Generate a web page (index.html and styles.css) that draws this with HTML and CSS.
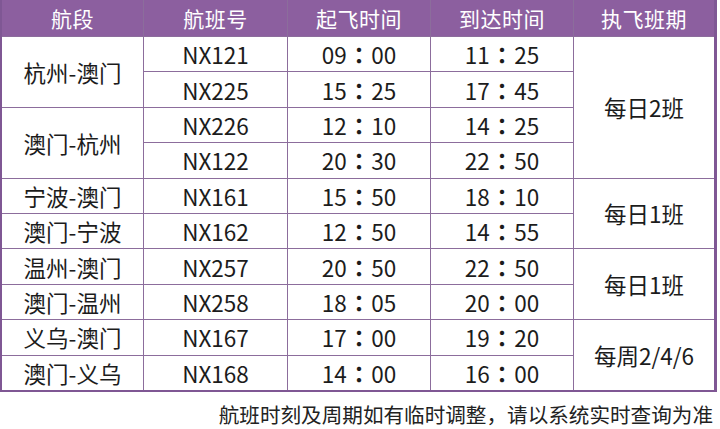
FILE: index.html
```html
<!DOCTYPE html>
<html lang="zh">
<head>
<meta charset="utf-8">
<link rel="stylesheet" href="styles.css">
</head>
<body>
<div class="sched">
  <div class="hd">航段</div>
  <div class="hd">航班号</div>
  <div class="hd">起飞时间</div>
  <div class="hd">到达时间</div>
  <div class="hd">执飞班期</div>

  <div class="c span2">杭州-澳门</div>
  <div class="c">NX121</div>
  <div class="c">09<span class="col">：</span>00</div>
  <div class="c">11<span class="col">：</span>25</div>
  <div class="c span4 last">每日2班</div>
  <div class="c">NX225</div>
  <div class="c">15<span class="col">：</span>25</div>
  <div class="c">17<span class="col">：</span>45</div>

  <div class="c span2">澳门-杭州</div>
  <div class="c">NX226</div>
  <div class="c">12<span class="col">：</span>10</div>
  <div class="c">14<span class="col">：</span>25</div>
  <div class="c">NX122</div>
  <div class="c">20<span class="col">：</span>30</div>
  <div class="c">22<span class="col">：</span>50</div>

  <div class="c">宁波-澳门</div>
  <div class="c">NX161</div>
  <div class="c">15<span class="col">：</span>50</div>
  <div class="c">18<span class="col">：</span>10</div>
  <div class="c span2 last">每日1班</div>
  <div class="c">澳门-宁波</div>
  <div class="c">NX162</div>
  <div class="c">12<span class="col">：</span>50</div>
  <div class="c">14<span class="col">：</span>55</div>

  <div class="c">温州-澳门</div>
  <div class="c">NX257</div>
  <div class="c">20<span class="col">：</span>50</div>
  <div class="c">22<span class="col">：</span>50</div>
  <div class="c span2 last">每日1班</div>
  <div class="c">澳门-温州</div>
  <div class="c">NX258</div>
  <div class="c">18<span class="col">：</span>05</div>
  <div class="c">20<span class="col">：</span>00</div>

  <div class="c">义乌-澳门</div>
  <div class="c">NX167</div>
  <div class="c">17<span class="col">：</span>00</div>
  <div class="c">19<span class="col">：</span>20</div>
  <div class="c span2 last">每周2/4/6</div>
  <div class="c">澳门-义乌</div>
  <div class="c">NX168</div>
  <div class="c">14<span class="col">：</span>00</div>
  <div class="c">16<span class="col">：</span>00</div>
</div>
<p class="note">航班时刻及周期如有临时调整，请以系统实时查询为准</p>
</body>
</html>
```

FILE: styles.css
```css
html, body {
  margin: 0;
  padding: 0;
  background: #ffffff;
}
body {
  width: 720px;
  height: 429px;
  overflow: hidden;
  font-family: "Noto Sans CJK SC", "Noto Sans", sans-serif;
  color: #1c1c1c;
}
.sched {
  display: grid;
  width: 712px;
  grid-template-columns: 141px 143px 142px 142px 140px;
  grid-template-rows: 36px repeat(10, 34.4px);
  gap: 1px;
  background: #8c6d9c;
  border: 2px solid #7f5794;
  border-top: 0;
  border-right-width: 3px;
}
.hd {
  background: #8c5f9f;
  color: #ffffff;
  font-size: 21px;
  display: flex;
  align-items: center;
  justify-content: center;
  letter-spacing: 0.5px;
}
.c {
  background: #ffffff;
  font-size: 22.5px;
  display: flex;
  align-items: center;
  justify-content: center;
  white-space: pre;
}
.col {
  font-family: "Noto Sans CJK TC", "Noto Sans CJK SC", sans-serif;
  font-weight: 700;
  margin: 0 1px;
}
.c.last {
  grid-column: 5;
}
.span2 {
  grid-row: span 2;
}
.span4 {
  grid-row: span 4;
}
.note {
  margin: 0;
  padding: 8px 7px 0 0;
  text-align: right;
  font-size: 20.6px;
  line-height: 28px;
  color: #222222;
}
```
